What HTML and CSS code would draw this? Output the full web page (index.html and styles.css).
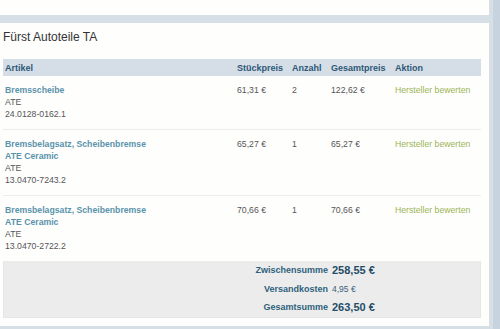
FILE: index.html
```
<!DOCTYPE html>
<html lang="de">
<head>
<meta charset="utf-8">
<title>Bestellung</title>
<link rel="stylesheet" href="styles.css">
</head>
<body>
<div class="page">
  <div class="main">
    <div class="card card-top"></div>
    <div class="card shop">
      <h2 class="shop-title">Fürst Autoteile TA</h2>
      <table class="items">
        <colgroup>
          <col class="c-art"><col class="c-price"><col class="c-qty"><col class="c-total"><col class="c-act">
        </colgroup>
        <thead>
          <tr><th>Artikel</th><th>Stückpreis</th><th>Anzahl</th><th>Gesamtpreis</th><th>Aktion</th></tr>
        </thead>
        <tbody>
          <tr>
            <td><a class="item-link">Bremsscheibe</a><br>ATE<br>24.0128-0162.1</td>
            <td>61,31 €</td><td>2</td><td>122,62 €</td><td><a class="rate">Hersteller bewerten</a></td>
          </tr>
          <tr>
            <td><a class="item-link">Bremsbelagsatz, Scheibenbremse<br>ATE Ceramic</a><br>ATE<br>13.0470-7243.2</td>
            <td>65,27 €</td><td>1</td><td>65,27 €</td><td><a class="rate">Hersteller bewerten</a></td>
          </tr>
          <tr>
            <td><a class="item-link">Bremsbelagsatz, Scheibenbremse<br>ATE Ceramic</a><br>ATE<br>13.0470-2722.2</td>
            <td>70,66 €</td><td>1</td><td>70,66 €</td><td><a class="rate">Hersteller bewerten</a></td>
          </tr>
        </tbody>
      </table>
      <div class="summary">
        <span class="s-label">Zwischensumme</span><span class="s-value big">258,55 €</span>
        <span class="s-label">Versandkosten</span><span class="s-value">4,95 €</span>
        <span class="s-label">Gesamtsumme</span><span class="s-value big">263,50 €</span>
      </div>
    </div>
    <div class="card card-next"></div>
  </div>
  <div class="rail"></div>
</div>
</body>
</html>
```
FILE: styles.css
```
* { box-sizing: border-box; }
html, body { margin: 0; padding: 0; }
body {
  width: 500px;
  height: 329px;
  overflow: hidden;
  background: #d6dee6;
  font-family: "Liberation Sans", Arial, sans-serif;
  color: #555;
}
.page {
  display: flex;
  height: 329px;
  overflow: hidden;
}
.main {
  width: 489px;
  display: flex;
  flex-direction: column;
  gap: 8px;
}
.rail {
  width: 7px;
  margin-left: 4px;
  background: #c7d3df;
}
.card {
  flex-shrink: 0;
  background: #fefefd;
}
.card-top {
  height: 15px;
}
.card-next {
  height: 10px;
  margin-top: -8px;
  border-top: 3px solid #d6dee6;
  background: #dfe7ee;
}
.shop {
  padding: 7px 8px 8px 3px;
}
.shop-title {
  margin: 0 0 15px 0;
  font-size: 12px;
  line-height: 14px;
  font-weight: normal;
  color: #333;
}
.items {
  width: 478px;
  border-collapse: collapse;
  table-layout: fixed;
  font-size: 8.7px;
}
.c-art { width: 232px; }
.c-price { width: 55px; }
.c-qty { width: 39px; }
.c-total { width: 64px; }
.c-act { width: 88px; }
.items th {
  height: 17px;
  padding: 0 2px;
  background: #d5dee6;
  color: #2d5877;
  font-weight: bold;
  font-size: 9px;
  text-align: left;
  vertical-align: middle;
}
.items td {
  padding: 8px 2px 9px;
  line-height: 12px;
  vertical-align: top;
  color: #555;
}
.items tbody tr + tr td {
  border-top: 1px solid #ededed;
}
.item-link {
  color: #5a93ab;
  font-weight: bold;
}
.rate {
  color: #9db456;
}
.summary {
  display: grid;
  grid-template-columns: 324px auto;
  column-gap: 4px;
  align-items: center;
  height: 57px;
  padding-bottom: 1.5px;
  background: #ececec;
  border: 1px solid #e6e6e6;
  border-top: none;
  grid-auto-rows: 18.5px;
}
.s-label {
  text-align: right;
  font-size: 9px;
  font-weight: bold;
  color: #2f627d;
}
.s-value {
  font-size: 8.5px;
  color: #3a6178;
}
.s-value.big {
  font-size: 11px;
  font-weight: bold;
  color: #234d68;
}
```
